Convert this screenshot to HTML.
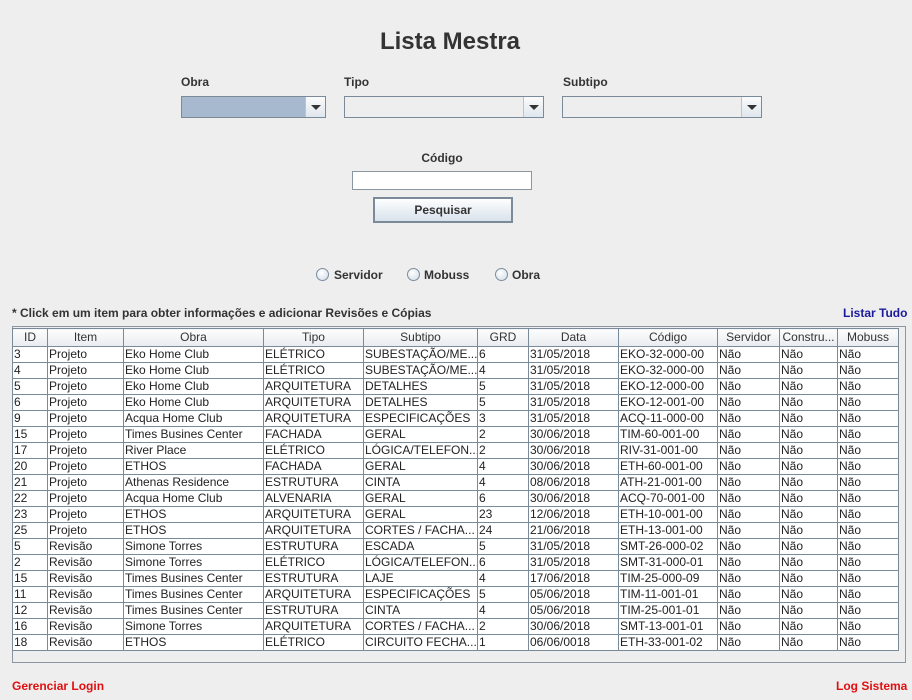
<!DOCTYPE html>
<html><head><meta charset="utf-8"><style>
body{margin:0;width:912px;height:700px;background:#eeeeee;font-family:"Liberation Sans",sans-serif;position:relative;overflow:hidden;color:#333}
.a{position:absolute}
.lbl{font-size:12px;font-weight:bold;color:#333}
.combo{position:absolute;height:22px;border:1px solid #7a8a99;background:#eeeeee;box-sizing:border-box}
.combo .arr{position:absolute;right:0;top:0;width:19px;height:20px;border-left:1px solid #b8c4d0;background:linear-gradient(#fafbfc,#dfe6ee)}
.combo .arr:after{content:"";position:absolute;left:5px;top:8px;border-left:5px solid transparent;border-right:5px solid transparent;border-top:5px solid #333}
.radio{position:absolute;width:11px;height:11px;border-radius:50%;border:1px solid #7c8c9c;background:radial-gradient(circle at 40% 35%,#fff,#d0dbe6)}
table{border-collapse:collapse;font-size:12px;table-layout:fixed}
td{border:1px solid #7a8a99;height:15px;padding:0 0 0 1px;white-space:nowrap;overflow:hidden;background:#fff;color:#222;line-height:15px}
th{border:1px solid #7a8a99;height:17px;font-weight:normal;background:linear-gradient(#fdfdfd,#e8ebef);color:#333;padding:0;line-height:17px}
</style></head><body>
<div class="a" style="left:0;top:28px;width:900px;text-align:center;font-size:24px;font-weight:bold;color:#333">Lista Mestra</div>
<div class="a lbl" style="left:181px;top:75px">Obra</div>
<div class="a lbl" style="left:344px;top:75px">Tipo</div>
<div class="a lbl" style="left:563px;top:75px">Subtipo</div>
<div class="combo" style="left:181px;top:96px;width:145px;background:#a7b9cf"><div class="arr"></div></div>
<div class="combo" style="left:344px;top:96px;width:200px"><div class="arr"></div></div>
<div class="combo" style="left:562px;top:96px;width:200px"><div class="arr"></div></div>
<div class="a lbl" style="left:352px;top:151px;width:180px;text-align:center">Código</div>
<div class="a" style="left:352px;top:171px;width:180px;height:19px;background:#fff;border:1px solid #8a96a2;box-sizing:border-box"></div>
<div class="a" style="left:373px;top:197px;width:140px;height:26px;box-sizing:border-box;border:2px solid #7a8a99;background:linear-gradient(#fdfefe,#d9e2ec);text-align:center;font-size:12px;font-weight:bold;line-height:22px;color:#333">Pesquisar</div>
<div class="radio" style="left:316px;top:268px"></div><div class="a lbl" style="left:334px;top:268px">Servidor</div>
<div class="radio" style="left:407px;top:268px"></div><div class="a lbl" style="left:424px;top:268px">Mobuss</div>
<div class="radio" style="left:495px;top:268px"></div><div class="a lbl" style="left:512px;top:268px">Obra</div>
<div class="a lbl" style="left:12px;top:306px">* Click em um item para obter informações e adicionar Revisões e Cópias</div>
<div class="a lbl" style="left:843px;top:306px;color:#1a1a9c">Listar Tudo</div>
<div class="a" style="left:12px;top:326px;width:894px;height:337px;border:1px solid #8a96a2;box-sizing:border-box;background:#eeeeee"></div>
<table class="a" style="left:12px;top:328px;width:886px">
<colgroup><col style="width:35px"><col style="width:76px"><col style="width:140px"><col style="width:100px"><col style="width:114px"><col style="width:51px"><col style="width:90px"><col style="width:99px"><col style="width:62px"><col style="width:58px"><col style="width:61px"></colgroup>
<tr><th>ID</th><th>Item</th><th>Obra</th><th>Tipo</th><th>Subtipo</th><th>GRD</th><th>Data</th><th>Código</th><th>Servidor</th><th>Constru...</th><th>Mobuss</th></tr>
<tr><td>3</td><td>Projeto</td><td>Eko Home Club</td><td>ELÉTRICO</td><td>SUBESTAÇÃO/ME...</td><td>6</td><td>31/05/2018</td><td>EKO-32-000-00</td><td>Não</td><td>Não</td><td>Não</td></tr>
<tr><td>4</td><td>Projeto</td><td>Eko Home Club</td><td>ELÉTRICO</td><td>SUBESTAÇÃO/ME...</td><td>4</td><td>31/05/2018</td><td>EKO-32-000-00</td><td>Não</td><td>Não</td><td>Não</td></tr>
<tr><td>5</td><td>Projeto</td><td>Eko Home Club</td><td>ARQUITETURA</td><td>DETALHES</td><td>5</td><td>31/05/2018</td><td>EKO-12-000-00</td><td>Não</td><td>Não</td><td>Não</td></tr>
<tr><td>6</td><td>Projeto</td><td>Eko Home Club</td><td>ARQUITETURA</td><td>DETALHES</td><td>5</td><td>31/05/2018</td><td>EKO-12-001-00</td><td>Não</td><td>Não</td><td>Não</td></tr>
<tr><td>9</td><td>Projeto</td><td>Acqua Home Club</td><td>ARQUITETURA</td><td>ESPECIFICAÇÕES</td><td>3</td><td>31/05/2018</td><td>ACQ-11-000-00</td><td>Não</td><td>Não</td><td>Não</td></tr>
<tr><td>15</td><td>Projeto</td><td>Times Busines Center</td><td>FACHADA</td><td>GERAL</td><td>2</td><td>30/06/2018</td><td>TIM-60-001-00</td><td>Não</td><td>Não</td><td>Não</td></tr>
<tr><td>17</td><td>Projeto</td><td>River Place</td><td>ELÉTRICO</td><td>LÓGICA/TELEFON...</td><td>2</td><td>30/06/2018</td><td>RIV-31-001-00</td><td>Não</td><td>Não</td><td>Não</td></tr>
<tr><td>20</td><td>Projeto</td><td>ETHOS</td><td>FACHADA</td><td>GERAL</td><td>4</td><td>30/06/2018</td><td>ETH-60-001-00</td><td>Não</td><td>Não</td><td>Não</td></tr>
<tr><td>21</td><td>Projeto</td><td>Athenas Residence</td><td>ESTRUTURA</td><td>CINTA</td><td>4</td><td>08/06/2018</td><td>ATH-21-001-00</td><td>Não</td><td>Não</td><td>Não</td></tr>
<tr><td>22</td><td>Projeto</td><td>Acqua Home Club</td><td>ALVENARIA</td><td>GERAL</td><td>6</td><td>30/06/2018</td><td>ACQ-70-001-00</td><td>Não</td><td>Não</td><td>Não</td></tr>
<tr><td>23</td><td>Projeto</td><td>ETHOS</td><td>ARQUITETURA</td><td>GERAL</td><td>23</td><td>12/06/2018</td><td>ETH-10-001-00</td><td>Não</td><td>Não</td><td>Não</td></tr>
<tr><td>25</td><td>Projeto</td><td>ETHOS</td><td>ARQUITETURA</td><td>CORTES / FACHA...</td><td>24</td><td>21/06/2018</td><td>ETH-13-001-00</td><td>Não</td><td>Não</td><td>Não</td></tr>
<tr><td>5</td><td>Revisão</td><td>Simone Torres</td><td>ESTRUTURA</td><td>ESCADA</td><td>5</td><td>31/05/2018</td><td>SMT-26-000-02</td><td>Não</td><td>Não</td><td>Não</td></tr>
<tr><td>2</td><td>Revisão</td><td>Simone Torres</td><td>ELÉTRICO</td><td>LÓGICA/TELEFON...</td><td>6</td><td>31/05/2018</td><td>SMT-31-000-01</td><td>Não</td><td>Não</td><td>Não</td></tr>
<tr><td>15</td><td>Revisão</td><td>Times Busines Center</td><td>ESTRUTURA</td><td>LAJE</td><td>4</td><td>17/06/2018</td><td>TIM-25-000-09</td><td>Não</td><td>Não</td><td>Não</td></tr>
<tr><td>11</td><td>Revisão</td><td>Times Busines Center</td><td>ARQUITETURA</td><td>ESPECIFICAÇÕES</td><td>5</td><td>05/06/2018</td><td>TIM-11-001-01</td><td>Não</td><td>Não</td><td>Não</td></tr>
<tr><td>12</td><td>Revisão</td><td>Times Busines Center</td><td>ESTRUTURA</td><td>CINTA</td><td>4</td><td>05/06/2018</td><td>TIM-25-001-01</td><td>Não</td><td>Não</td><td>Não</td></tr>
<tr><td>16</td><td>Revisão</td><td>Simone Torres</td><td>ARQUITETURA</td><td>CORTES / FACHA...</td><td>2</td><td>30/06/2018</td><td>SMT-13-001-01</td><td>Não</td><td>Não</td><td>Não</td></tr>
<tr><td>18</td><td>Revisão</td><td>ETHOS</td><td>ELÉTRICO</td><td>CIRCUITO FECHA...</td><td>1</td><td>06/06/0018</td><td>ETH-33-001-02</td><td>Não</td><td>Não</td><td>Não</td></tr>
</table>
<div class="a lbl" style="left:12px;top:679px;color:#e01010">Gerenciar Login</div>
<div class="a lbl" style="left:836px;top:679px;color:#e01010">Log Sistema</div>
</body></html>
